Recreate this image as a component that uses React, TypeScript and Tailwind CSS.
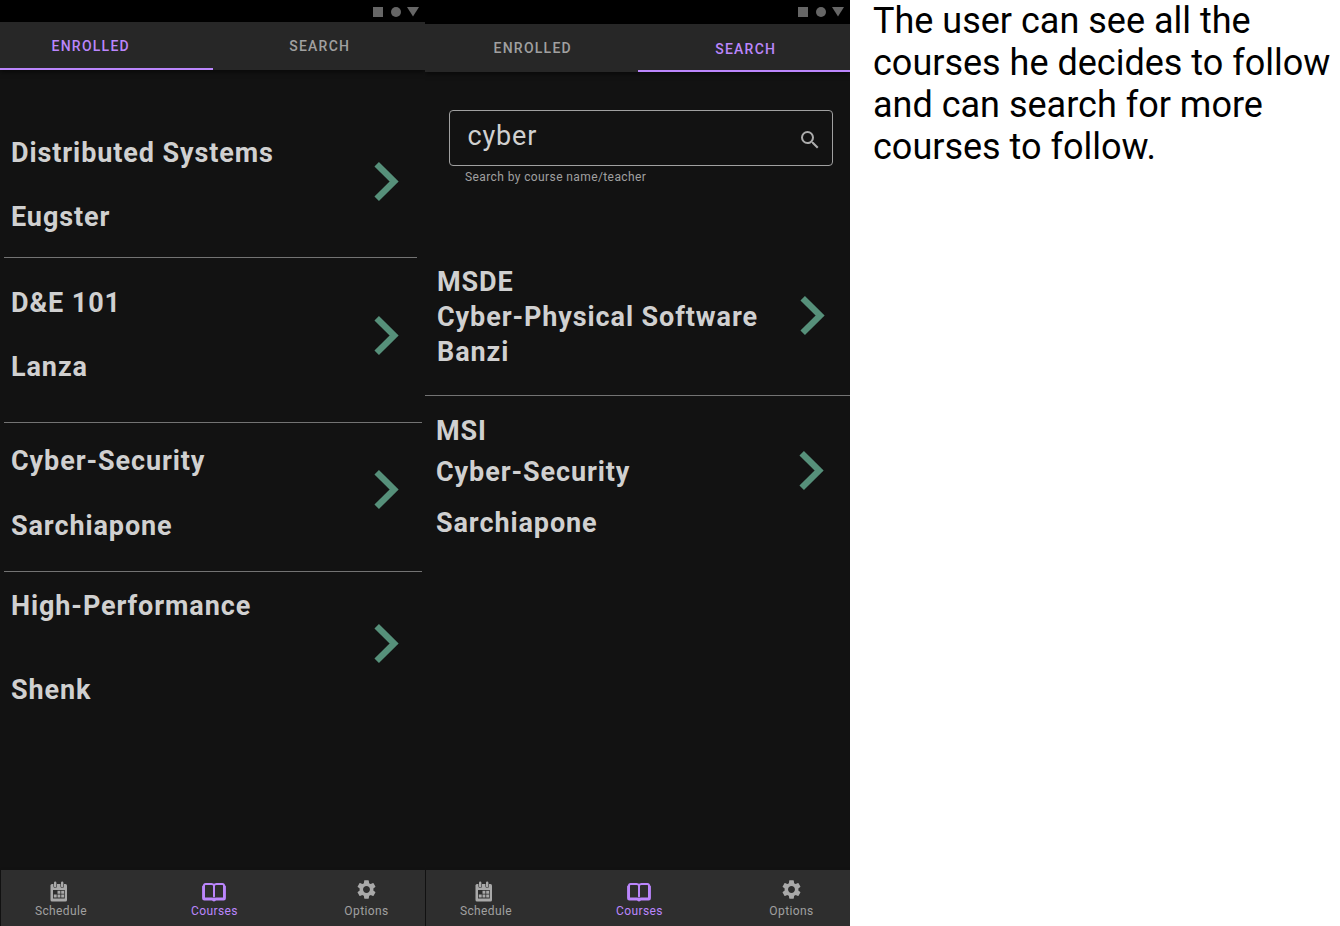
import React from "react";
import { MdSearch, MdSettings } from "react-icons/md";

function StatusBar({ className }: { className: string }) {
  return (
    <div className={`flex justify-end bg-black pt-[7px] pr-1.5 ${className}`}>
      <svg width="47" height="10" viewBox="0 0 47 10" fill="#666">
        <path d="M1 0h10v10H1z" />
        <circle cx="24" cy="5" r="5" />
        <path d="M35 0h12l-6 9.5z" />
      </svg>
    </div>
  );
}

function Tab({ label, active, className }: { label: string; active: boolean; className: string }) {
  return (
    <div
      className={`h-12 border-b-2 text-sm leading-4 font-medium ${className} ${
        active ? "border-[#bb86fc] text-[#bb86fc]" : "border-transparent text-[#a0a0a0]"
      }`}
    >
      {label}
    </div>
  );
}

function Chevron() {
  return (
    <svg className="block" width="25" height="39" viewBox="0 0 25 39" fill="none" stroke="#56907a" strokeWidth="6.4">
      <path d="M2.7 2.3 20.1 19.5 2.7 36.7" />
    </svg>
  );
}

function Line({ text, className }: { text: string; className: string }) {
  return <div className={`h-8 whitespace-nowrap ${className}`}>{text}</div>;
}

function Calendar() {
  return (
    <svg width="18" height="21" viewBox="0 0 18 21">
      <path d="M2 3h13.500q1.500 0 1.500 1.500v14.500q0 1.500-1.500 1.500H2Q.5 20.500.5 19V4.500Q.5 3 2 3z" fill="#a9a9a9" />
      <path d="M5.200 1.800v3.400M12.200 1.800v3.400" stroke="#2e2e2e" strokeWidth="3.600" strokeLinecap="round" />
      <path d="M5.200 1.800v3.400M12.200 1.800v3.400" stroke="#a9a9a9" strokeWidth="2.400" strokeLinecap="round" />
      <path d="M3 9h11.800v8.500H3z" fill="#2e2e2e" />
      <path d="M7.500 9.800h2.900v2.900H7.500zM11.200 9.800h2.900v2.900h-2.900zM3.800 13.600h2.900v2.900H3.800zM7.500 13.600h2.900v2.900H7.500zM11.200 13.600h2.900v2.900h-2.900z" fill="#a9a9a9" />
    </svg>
  );
}

function Book() {
  return (
    <svg width="26" height="20" viewBox="0 0 26 20" fill="none" stroke="#bb86fc" strokeLinecap="round" strokeLinejoin="round">
      <path d="M13 3.200Q12.300 2 10.500 2H4.600Q3 2 3 3.600V16.400h7.700q1.700 0 2.300 1 .6-1 2.300-1H23V3.600Q23 2 21.400 2H15.500q-1.800 0-2.500 1.200v11.300" strokeWidth="2" />
      <path d="M1.900 4.400v11.800q0 1.400 1.400 1.400h8q.6 1 1.700 1t1.700-1h8q1.400 0 1.400-1.400V4.400" strokeWidth="1.600" />
    </svg>
  );
}

function BottomNav() {
  return (
    <div className="ml-px flex h-14 bg-[#2e2e2e] text-xs leading-[14px] tracking-[0.4px] text-[#a0a0a0] shadow-[0_0_2px_#111]">
      <div className="flex w-[120px] flex-col items-center pt-[11px]">
        <div className="mr-1 h-[23px]"><Calendar /></div>
        <span>Schedule</span>
      </div>
      <div className="flex w-[187px] flex-col items-center pt-[12px] text-[#bb86fc]">
        <div className="mr-px h-[22px]"><Book /></div>
        <span>Courses</span>
      </div>
      <div className="flex w-[117px] flex-col items-center pt-2">
        <div className="mr-px h-[26px]"><MdSettings className="text-[#a9a9a9]" size={23} /></div>
        <span>Options</span>
      </div>
    </div>
  );
}

const enrolled = [
  { course: "Distributed Systems", teacher: "Eugster", row: "h-[188px] pt-[67px]", gap: "mt-8", arrow: "mt-[25px]", line: "w-[413px]" },
  { course: "D&E 101", teacher: "Lanza", row: "h-[165px] pt-[29px]", gap: "mt-8", arrow: "mt-[29px]", line: "w-[418px]" },
  { course: "Cyber-Security", teacher: "Sarchiapone", row: "h-[149px] pt-[22px]", gap: "mt-[33px]", arrow: "mt-[25px]", line: "w-[418px]" },
  { course: "High-Performance", teacher: "Shenk", row: "h-[160px] pt-[18px]", gap: "mt-[52px]", arrow: "mt-[34px]", line: "" },
];

export default function App() {
  return (
    <main className="flex h-[926px] w-[1340px] overflow-hidden bg-white font-[Roboto,sans-serif]">
      <section className="flex w-[425px] flex-col overflow-hidden bg-[#121212]">
        <StatusBar className="h-[22px]" />
        <div className="flex h-12 bg-[#272727] tracking-[1.25px] shadow-[0_2px_5px_#0008]">
          <Tab label="ENROLLED" active className="w-[213px] pt-4 pl-[51.5px]" />
          <Tab label="SEARCH" active={false} className="w-[212px] pt-4 pl-[76.2px]" />
        </div>
        <div className="flex-1 text-[27px] leading-8 font-bold tracking-[0.9px] text-[#d0d0d0]">
          {enrolled.map((c) => (
            <div key={c.course}>
              <div className={`flex pl-[11px] ${c.row}`}>
                <div className="w-[363px]">
                  <Line text={c.course} className="" />
                  <Line text={c.teacher} className={c.gap} />
                </div>
                <div className={c.arrow}><Chevron /></div>
              </div>
              {c.line && <div className={`-mt-px ml-1 h-px bg-[#737373] ${c.line}`} />}
            </div>
          ))}
        </div>
        <BottomNav />
      </section>

      <section className="flex w-[425px] flex-col overflow-hidden bg-[#121212]">
        <StatusBar className="h-6" />
        <div className="flex h-12 bg-[#272727] tracking-[1.25px] shadow-[0_2px_5px_#0008]">
          <Tab label="ENROLLED" active={false} className="w-[213px] pt-4 pl-[68.5px]" />
          <Tab label="SEARCH" active className="w-[212px] pt-[17px] pl-[77.2px]" />
        </div>
        <div className="mt-[38px] ml-6 flex h-14 w-[384px] justify-between rounded border border-[#a0a0a0] pr-[10px] pl-[17.5px]">
          <span className="pt-[9px] text-[27px] leading-8 tracking-[0.85px] text-[#d0d0d0]">cyber</span>
          <MdSearch className="mt-[17px] text-[#acacac]" size={24} />
        </div>
        <p className="mt-1 ml-10 text-xs leading-[14px] tracking-[0.4px] text-[#a0a0a0]">Search by course name/teacher</p>
        <div className="mt-[82px] flex-1 text-[27px] leading-8 font-bold tracking-[0.9px] text-[#d0d0d0]">
          <div className="flex h-[130px] border-b border-[#737373] pl-3">
            <div className="w-[363px]">
              <Line text="MSDE" className="" />
              <Line text="Cyber-Physical Software" className="mt-[3px]" />
              <Line text="Banzi" className="mt-[3px]" />
            </div>
            <div className="mt-[30px]"><Chevron /></div>
          </div>
          <div className="flex pt-[19px] pl-[11px]">
            <div className="w-[363px]">
              <Line text="MSI" className="" />
              <Line text="Cyber-Security" className="mt-[9px]" />
              <Line text="Sarchiapone" className="mt-[19px]" />
            </div>
            <div className="mt-[36px]"><Chevron /></div>
          </div>
        </div>
        <BottomNav />
      </section>

      <p className="w-[490px] pl-[23px] text-[36px] leading-[42px] text-black">
        The user can see all the<br />courses he decides to follow<br />and can search for more<br />courses to follow.
      </p>
    </main>
  );
}
